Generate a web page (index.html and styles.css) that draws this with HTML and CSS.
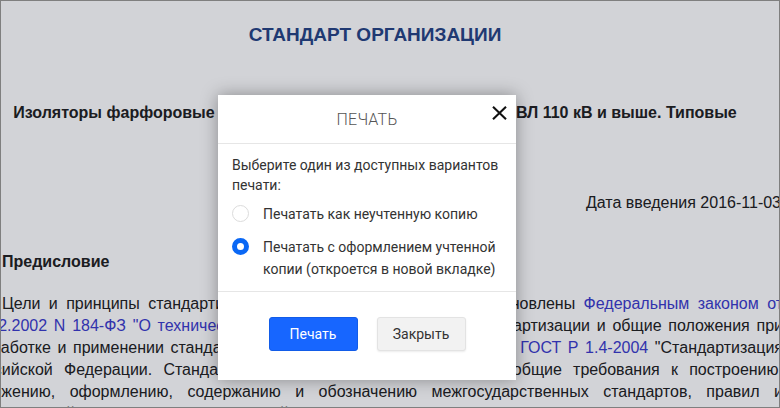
FILE: index.html
```html
<!DOCTYPE html>
<html lang="ru">
<head>
<meta charset="utf-8">
<title>Печать</title>
<link rel="stylesheet" href="styles.css">
</head>
<body>
<div class="frame">
  <div class="doc">
    <h1 class="doc-title">СТАНДАРТ ОРГАНИЗАЦИИ</h1>
    <div class="doc-subtitle">Изоляторы фарфоровые опорные стержневые линейные для ВЛ 110 кВ и выше. Типовые</div>
    <div class="doc-date">Дата введения 2016-11-03</div>
    <h2 class="doc-h2">Предисловие</h2>
    <p class="doc-p">Цели и принципы стандартизации в Российской Федерации установлены <a class="doc-link">Федеральным законом от</a><br>
<a class="doc-link">27.12.2002 N 184-ФЗ "О техническом регулировании"</a>, а правила стандартизации и общие положения при<br>
разработке и применении стандартов организаций и предприятий РФ - <a class="doc-link">ГОСТ Р 1.4-2004</a> "Стандартизация<br>
Российской Федерации. Стандарты организаций. Общие правила", общие требования к построению,<br>
изложению, оформлению, содержанию и обозначению межгосударственных стандартов, правил и<br>
рекомендаций по межгосударственной стандартизации - <a class="doc-link">ГОСТ 1.5-2001</a> "Межгосударственная</p>
  </div>
  <div class="backdrop"></div>
  <div class="modal">
    <div class="modal-head">
      <div class="modal-title">ПЕЧАТЬ</div>
      <button class="modal-close" aria-label="Закрыть">
        <svg width="15" height="14" viewBox="0 0 15 14"><path d="M1 0.8 L14 13.2 M14 0.8 L1 13.2" stroke="#111" stroke-width="2.1" fill="none"/></svg>
      </button>
    </div>
    <div class="modal-body">
      <div class="modal-text">Выберите один из доступных вариантов печати:</div>
      <label class="opt">
        <span class="radio"></span>
        <span class="opt-text">Печатать как неучтенную копию</span>
      </label>
      <label class="opt">
        <span class="radio radio-on"></span>
        <span class="opt-text">Печатать с оформлением учтенной копии (откроется в новой вкладке)</span>
      </label>
    </div>
    <div class="modal-foot">
      <button class="btn btn-primary">Печать</button>
      <button class="btn btn-gray">Закрыть</button>
    </div>
  </div>
</div>
</body>
</html>
```
FILE: styles.css
```css
html, body {
  margin: 0;
  padding: 0;
}
body {
  width: 780px;
  height: 408px;
  overflow: hidden;
}
.frame {
  position: relative;
  width: 780px;
  height: 408px;
  box-sizing: border-box;
  border: 1px solid #7f7f7f;
  overflow: hidden;
  background: #fff;
}
.doc {
  margin-left: -34px;
  width: 816px;
  font-family: "Liberation Sans", Arial, sans-serif;
  font-size: 16px;
  color: #222;
}
.doc-title {
  margin: 22px 0 0;
  font-size: 19px;
  line-height: 23px;
  font-weight: bold;
  text-align: center;
  color: #274585;
}
.doc-subtitle {
  margin-top: 57px;
  font-weight: bold;
  line-height: 20px;
  text-align: center;
}
.doc-date {
  margin-top: 70px;
  margin-right: 2px;
  line-height: 20px;
  text-align: right;
}
.doc-h2 {
  margin: 39px 0 0;
  font-size: 16px;
  line-height: 20px;
  font-weight: bold;
  text-indent: 35px;
}
.doc-p {
  margin: 21px 0 0;
  line-height: 22px;
  text-align: justify;
  text-align-last: justify;
  text-indent: 35px;
}
.doc-link {
  color: #3c3ccc;
}
.backdrop {
  position: absolute;
  inset: 0;
  background: rgba(0, 3, 26, 0.175);
}
.modal {
  position: absolute;
  left: 217px;
  top: 94px;
  width: 298px;
  height: 285px;
  background: #fff;
  box-shadow: 0 0 16px rgba(0, 0, 0, 0.35);
  display: flex;
  flex-direction: column;
  font-family: Roboto, "Liberation Sans", sans-serif;
  color: #333;
}
.modal-head {
  position: relative;
  height: 48px;
  border-bottom: 1px solid #e6e6e6;
  display: flex;
  align-items: center;
  justify-content: center;
}
.modal-title {
  font-size: 16px;
  font-weight: 300;
  color: #555;
  letter-spacing: 0.2px;
}
.modal-close {
  position: absolute;
  right: 9px;
  top: 11px;
  width: 15px;
  height: 14px;
  padding: 0;
  border: 0;
  background: none;
  display: flex;
}
.modal-body {
  flex: 1;
  padding: 11px 14px 0;
  font-size: 14px;
}
.modal-text {
  line-height: 20px;
  margin-bottom: 8px;
}
.opt {
  display: flex;
  align-items: flex-start;
  gap: 14px;
  line-height: 22px;
  margin-bottom: 11px;
}
.radio {
  flex: none;
  width: 17px;
  height: 17px;
  margin-top: 2px;
  box-sizing: border-box;
  border: 1.5px solid #dcdcdc;
  border-radius: 50%;
  background: #fff;
}
.radio-on {
  border: 5px solid #0a68f5;
}
.modal-foot {
  height: 89px;
  box-sizing: border-box;
  border-top: 1px solid #e6e6e6;
  padding-top: 25px;
  display: flex;
  justify-content: center;
  gap: 19px;
}
.btn {
  width: 89px;
  height: 34px;
  border-radius: 3px;
  font-family: Roboto, "Liberation Sans", sans-serif;
  font-size: 14px;
  cursor: pointer;
}
.btn-primary {
  background: #1766ff;
  border: 1px solid #125ce8;
  color: #fff;
}
.btn-gray {
  background: #f2f2f2;
  border: 1px solid #e3e3e3;
  color: #333;
  box-shadow: 0 1px 2px rgba(0, 0, 0, 0.08);
}
```
